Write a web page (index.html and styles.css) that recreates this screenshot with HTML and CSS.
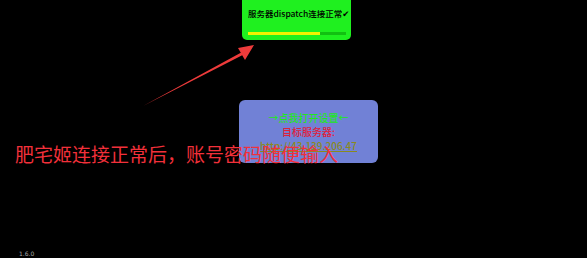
FILE: index.html
```html
<!DOCTYPE html>
<html lang="zh">
<head>
<meta charset="utf-8">
<title>dispatch</title>
<link rel="stylesheet" href="styles.css">
</head>
<body>
<div class="stage">
  <div class="status">
    <div class="status-text">服务器dispatch连接正常✔</div>
    <div class="bar"><div class="bar-fill" style="width:73%"></div></div>
  </div>
  <div class="panel">
    <div class="panel-link">→点我打开设置←</div>
    <div class="panel-label">目标服务器:</div>
    <div class="panel-url">http://43.139.206.47</div>
  </div>
  <svg class="arrow" width="587" height="258" viewBox="0 0 587 258">
    <polygon points="143,106 240.8,52.7 238,48 254,45 245,60 242.2,55.3" fill="#ee3b3b"/>
  </svg>
  <div class="caption">肥宅姬连接正常后，账号密码随便输入</div>
  <div class="version">1.6.0</div>
</div>
</body>
</html>
```
FILE: styles.css
```css
html, body {
  margin: 0;
  padding: 0;
  background: #000;
}
body {
  width: 587px;
  height: 258px;
  overflow: hidden;
  font-family: "Noto Sans CJK SC", "DejaVu Sans", sans-serif;
}
.stage {
  position: relative;
  width: 587px;
  height: 258px;
  display: flex;
  flex-direction: column;
  align-items: flex-start;
}
.status {
  margin-left: 242px;
  width: 109px;
  height: 40px;
  box-sizing: border-box;
  background: #1ff01f;
  border-radius: 0 0 5px 5px;
  padding: 6px 5px 0 6px;
  display: flex;
  flex-direction: column;
}
.status-text {
  font-size: 8.5px;
  font-weight: 500;
  line-height: 14px;
  color: #000;
  text-align: center;
  white-space: nowrap;
}
.bar {
  margin-top: 12px;
  height: 3px;
  background: #12c012;
}
.bar-fill {
  height: 100%;
  background: #f2f200;
}
.panel {
  margin-top: 60px;
  margin-left: 239px;
  width: 139px;
  height: 63px;
  box-sizing: border-box;
  background: #7181d6;
  border-radius: 6px;
  padding-top: 11px;
  display: flex;
  flex-direction: column;
  align-items: center;
  gap: 1px;
  font-size: 10px;
  font-weight: 500;
  line-height: 13px;
  white-space: nowrap;
}
.panel-link {
  color: #22e622;
}
.panel-label {
  color: #e0203a;
}
.panel-url {
  color: #8a8a1e;
  text-decoration: underline;
}
.arrow {
  position: absolute;
  left: 0;
  top: 0;
}
.caption {
  position: absolute;
  left: 15px;
  top: 142px;
  font-size: 19px;
  line-height: 24px;
  color: #f2303a;
  white-space: nowrap;
}
.version {
  position: absolute;
  left: 19px;
  top: 250px;
  font-size: 6px;
  line-height: 8px;
  color: #a8a8a8;
  font-family: "DejaVu Sans", sans-serif;
}
```
